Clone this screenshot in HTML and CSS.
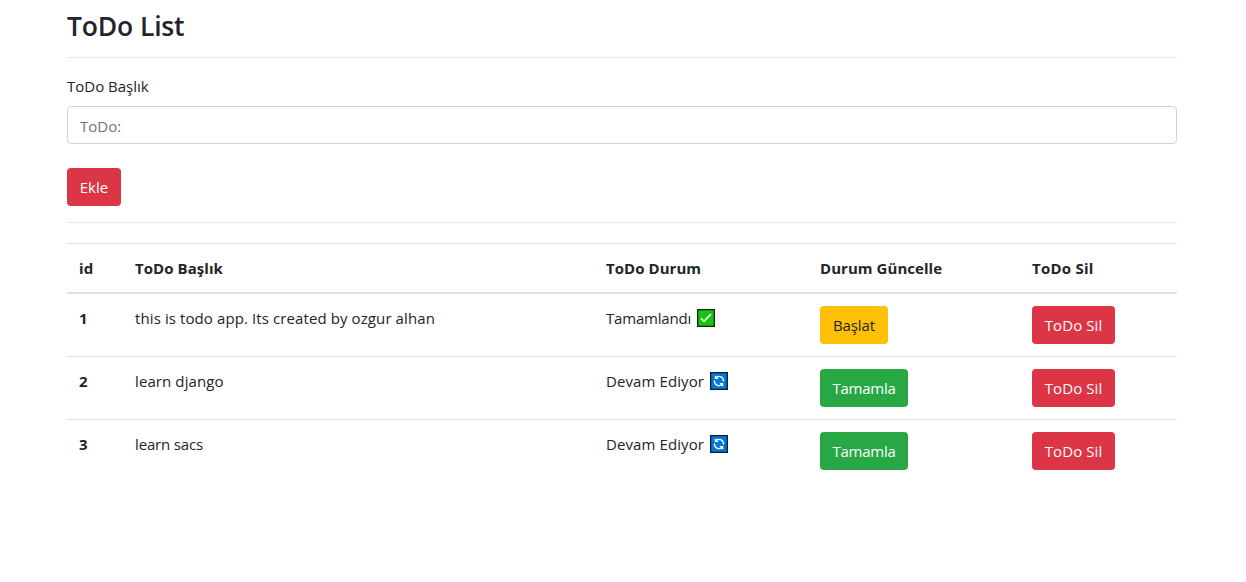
FILE: index.html
```html
<!DOCTYPE html>
<html lang="tr">
<head>
<meta charset="utf-8">
<title>ToDo List</title>
<link rel="stylesheet" href="styles.css">
</head>
<body>
<main class="container">
<h3 class="title">ToDo List</h3>
<hr>
<form>
<label class="label" for="todo">ToDo Başlık</label>
<input class="field" id="todo" type="text" placeholder="ToDo:">
<button class="btn red add" type="button">Ekle</button>
</form>
<hr>
<table class="table">
<colgroup><col class="c-id"><col class="c-name"><col class="c-state"><col class="c-update"><col class="c-del"></colgroup>
<thead><tr><th>id</th><th>ToDo Başlık</th><th>ToDo Durum</th><th>Durum Güncelle</th><th><span class="h-del">ToDo Sil</span></th></tr></thead>
<tbody>
<tr><th>1</th><td><span class="wide">this is todo app. Its created by ozgur alhan</span></td><td><span class="done">Tamamlandı</span><svg class="icon" viewBox="0 0 18 18"><path fill="#16c60c" stroke="#0b2a0b" stroke-width="1.3" d="M.65.65h16.7v16.7H.65z"/><path fill="none" stroke="#fff" stroke-width="1.7" d="M4 9.3l3 3 7-7.2"/></svg></td><td><button class="btn yellow">Başlat</button></td><td><button class="btn red del">ToDo Sil</button></td></tr>
<tr><th>2</th><td><span class="wide">learn django</span></td><td><span class="wide">Devam Ediyor</span><svg class="icon" viewBox="0 0 18 18"><path fill="#0078d7" stroke="#06203a" stroke-width="1.3" d="M.65.65h16.7v16.7H.65z"/><path fill="none" stroke="#fff" stroke-width="1.3" d="M6 5.6a4.5 4.5 0 0 1 7.5 3.9M12 12.4a4.5 4.5 0 0 1-7.5-3.9M5.4 3.8v2.6h2.8M12.6 14.2v-2.6H9.8"/></svg></td><td><button class="btn green">Tamamla</button></td><td><button class="btn red del">ToDo Sil</button></td></tr>
<tr><th>3</th><td><span class="tight">learn sacs</span></td><td><span class="wide">Devam Ediyor</span><svg class="icon" viewBox="0 0 18 18"><path fill="#0078d7" stroke="#06203a" stroke-width="1.3" d="M.65.65h16.7v16.7H.65z"/><path fill="none" stroke="#fff" stroke-width="1.3" d="M6 5.6a4.5 4.5 0 0 1 7.5 3.9M12 12.4a4.5 4.5 0 0 1-7.5-3.9M5.4 3.8v2.6h2.8M12.6 14.2v-2.6H9.8"/></svg></td><td><button class="btn green">Tamamla</button></td><td><button class="btn red del">ToDo Sil</button></td></tr>
</tbody>
</table>
</main>
</body>
</html>
```
FILE: styles.css
```css
* { box-sizing: border-box; }
body { margin: 0; background: #fff; color: #212529; font: 400 15px/24px "Open Sans", "Noto Sans", sans-serif; }
.container { width: 1110px; margin: 0 0 0 67px; padding-top: 9px; }
.title { margin: 0; font-size: 26.5px; line-height: 34px; font-weight: 600; letter-spacing: -.15px; }
hr { height: 1px; margin: 14px 0 16px; border: 0; background: #e5e5e5; }
form { margin: 0; }
.label { display: block; margin-bottom: 8px; }
.field { display: block; width: 100%; height: 38px; padding: 7px 12px 5px; border: 1px solid #ced4da; border-radius: 4px; font: inherit; color: #495057; }
.field::placeholder { color: #6c757d; opacity: 1; }
.btn { display: block; height: 38px; padding: 0; border: 0; border-radius: 4px; font: inherit; color: #fff; white-space: nowrap; }
.red { background: #dc3545; }
.green { width: 88px; background: #28a745; letter-spacing: -.25px; }
.yellow { width: 68px; background: #ffc107; color: #212529; letter-spacing: -.1px; }
.add { width: 54px; margin-top: 24px; }
.del { width: 83px; letter-spacing: .1px; }
form + hr { margin: 16px 0 20px; }
.table { width: 100%; table-layout: fixed; border-collapse: separate; border-spacing: 0; }
.c-id { width: 56px; }
.c-name { width: 471px; }
.c-state { width: 214px; }
.c-update { width: 212px; }
th, td { padding: 12px; border-top: 1px solid #dee2e6; text-align: left; vertical-align: top; white-space: nowrap; }
th { font-weight: 700; letter-spacing: .05px; }
thead th { border-bottom: 2px solid #dee2e6; }
tbody tr:first-child > * { border-top: 0; }
.wide { letter-spacing: .1px; }
.tight { letter-spacing: -.15px; }
.done { letter-spacing: -.2px; }
.h-del { letter-spacing: .25px; }
.icon { width: 18px; height: 18px; margin-left: 6px; vertical-align: -3px; }
```
